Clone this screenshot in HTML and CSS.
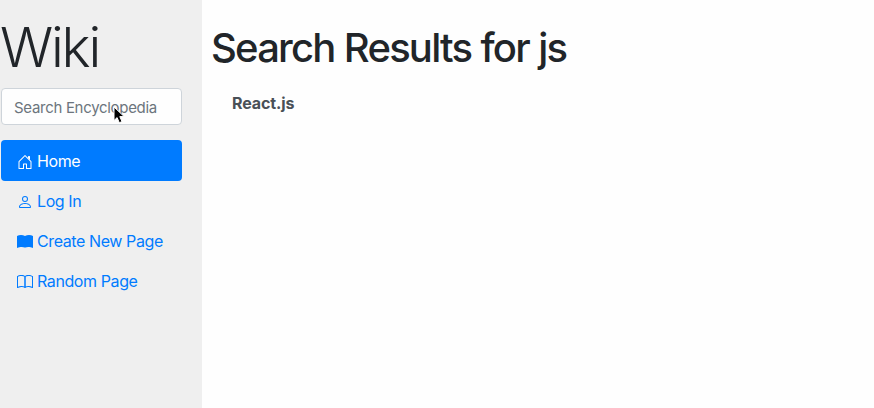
FILE: index.html
```html
<!DOCTYPE html>
<html lang="en">
<head>
<meta charset="utf-8">
<title>Search Results</title>
<link rel="stylesheet" href="styles.css">
</head>
<body>
<div class="layout">
  <aside class="sidebar">
    <h2 class="brand">Wiki</h2>
    <form class="search">
      <input class="search-input" type="text" placeholder="Search Encyclopedia">
      <svg class="cursor" width="13" height="19" viewBox="0 0 13 19"><path d="M1 1v13.500l3.100-2.900 2.200 5.100 2.700-1.100-2.200-5h4.400z" fill="#000" stroke="#fff" stroke-width="1"/></svg>
    </form>
    <nav class="menu">
      <a class="link active" href="#"><svg class="icon" viewBox="0 0 16 16"><path d="M7.646 1.146a.5.5 0 0 1 .708 0l6 6a.5.5 0 0 1 .146.354v7a.5.5 0 0 1-.5.5H9.500a.5.5 0 0 1-.5-.5v-4H7v4a.5.5 0 0 1-.5.5H2a.5.5 0 0 1-.5-.5v-7a.5.5 0 0 1 .146-.354l6-6zM2.500 7.707V14H6v-4a.5.5 0 0 1 .5-.5h3a.5.5 0 0 1 .5.5v4h3.500V7.707L8 2.207l-5.500 5.500z"/><path d="M13 2.500V6l-2-2V2.500a.5.5 0 0 1 .5-.5h1a.5.5 0 0 1 .5.5z"/></svg><span>Home</span></a>
      <a class="link" href="#"><svg class="icon" viewBox="0 0 16 16"><path fill-rule="evenodd" d="M13 14s1 0 1-1-1-4-6-4-6 3-6 4 1 1 1 1h10zm-9.995-.944v-.002.002zM3.022 13h9.956a.274.274 0 0 0 .014-.002l.008-.002c-.001-.246-.154-.986-.832-1.664C11.516 10.680 10.289 10 8 10c-2.290 0-3.516.680-4.168 1.332-.678.678-.830 1.418-.832 1.664a1.050 1.050 0 0 0 .022.004zM8 7a2 2 0 1 0 0-4 2 2 0 0 0 0 4zm3-2a3 3 0 1 1-6 0 3 3 0 0 1 6 0z"/></svg><span>Log In</span></a>
      <a class="link" href="#"><svg class="icon" viewBox="0 0 16 16"><path d="M0 1.900V13.500l.5.4C2 13.200 5.500 12.400 7.700 13.600h.6c2.200-1.200 5.700-.4 7.200.3L16 13.500V1.900C14 .8 10.500.5 8 1.900 5.500.5 2 .8 0 1.900z"/></svg><span>Create New Page</span></a>
      <a class="link" href="#"><svg class="icon" viewBox="0 0 16 16"><path fill-rule="evenodd" d="M3.214 1.072C4.813.752 6.916.710 8.354 2.146A.5.5 0 0 1 8.500 2.500v11a.5.5 0 0 1-.854.354c-.843-.844-2.115-1.059-3.470-.920-1.344.140-2.660.617-3.452 1.013A.5.5 0 0 1 0 13.500v-11a.5.5 0 0 1 .276-.447L.500 2.500l-.224-.447.002-.001.004-.002.013-.006a5.017 5.017 0 0 1 .220-.103 12.958 12.958 0 0 1 2.700-.869zM1 2.820v9.908c.846-.343 1.944-.672 3.074-.788 1.143-.118 2.387-.023 3.426.560V2.718c-1.063-.929-2.631-.956-4.090-.664A11.958 11.958 0 0 0 1 2.820z"/><path fill-rule="evenodd" d="M12.786 1.072C11.188.752 9.084.710 7.646 2.146A.5.5 0 0 0 7.500 2.500v11a.5.5 0 0 0 .854.354c.843-.844 2.115-1.059 3.470-.920 1.344.140 2.660.617 3.452 1.013A.5.5 0 0 0 16 13.500v-11a.5.5 0 0 0-.276-.447L15.500 2.500l.224-.447-.002-.001-.004-.002-.013-.006-.047-.023a12.582 12.582 0 0 0-.799-.340 12.960 12.960 0 0 0-2.073-.609zM15 2.820v9.908c-.846-.343-1.944-.672-3.074-.788-1.143-.118-2.387-.023-3.426.560V2.718c1.063-.929 2.631-.956 4.090-.664A11.956 11.956 0 0 1 15 2.820z"/></svg><span>Random Page</span></a>
    </nav>
  </aside>
  <main class="main">
    <h1 class="title">Search Results for js</h1>
    <a class="result" href="#">React.js</a>
  </main>
</div>
</body>
</html>
```
FILE: styles.css
```css
* { box-sizing: border-box; }
body {
  margin: 0;
  background: #fefefe;
  color: #212529;
  font: 400 16px/24px Inter, "Liberation Sans", sans-serif;
}
.layout { display: flex; height: 408px; overflow: hidden; }
.sidebar { width: 202px; flex: none; background: #efefef; padding: 14px 20px 0 1px; }
.brand { margin: 0 0 7px -1px; font-size: 55px; line-height: 67px; font-weight: 300; letter-spacing: -2.2px; }
.search { position: relative; margin: 0 0 15px; height: 37px; }
.search-input {
  display: block;
  width: 181px;
  height: 37px;
  padding: 7px 12px 5px;
  border: 1px solid #ced4da;
  border-radius: 4px;
  background: #fefefe;
  font: inherit;
  font-size: 15px;
  letter-spacing: -0.3px;
}
.search-input::placeholder { color: #6c757d; opacity: 1; }
.cursor { position: absolute; left: 112px; top: 18px; }
.menu { display: flex; flex-direction: column; }
.link {
  display: flex;
  align-items: center;
  gap: 4px;
  height: 40px;
  padding: 0 16px;
  border-radius: 4px;
  color: #007bff;
  text-decoration: none;
  letter-spacing: -0.4px;
  white-space: nowrap;
}
.active { background: #007bff; color: #fff; height: 41px; }
.icon { width: 16px; height: 16px; flex: none; margin-top: 2px; fill: currentColor; }
.main { flex: 1; padding: 24px 10px; }
.title { margin: 0 0 19px -1px; font-size: 40px; line-height: 48px; font-weight: 550; letter-spacing: -1.8px; word-spacing: 0.5px; white-space: nowrap; }
.result { display: block; margin-left: 20px; color: #495057; font-weight: 700; letter-spacing: -0.1px; text-decoration: none; }
```
